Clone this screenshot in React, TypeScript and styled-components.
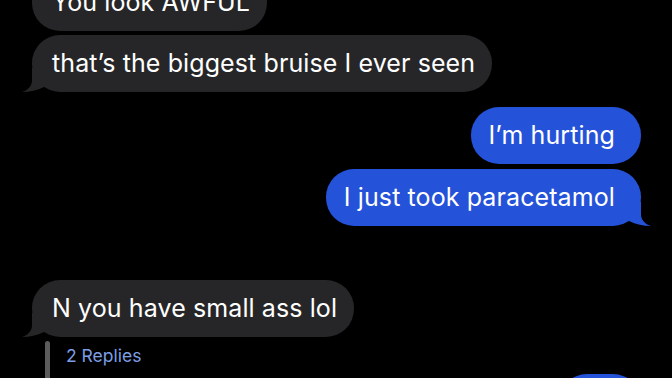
import React from "react";
import styled, { createGlobalStyle } from "styled-components";

type Side = "in" | "out";

interface Message {
  text: string;
  side: Side;
  tail?: boolean;
  gap: number;
}

const messages: Message[] = [
  { text: "You look AWFUL", side: "in", gap: 0 },
  { text: "that’s the biggest bruise I ever seen", side: "in", tail: true, gap: 4 },
  { text: "I’m hurting", side: "out", gap: 15 },
  { text: "I just took paracetamol", side: "out", tail: true, gap: 5 },
  { text: "N you have small ass lol", side: "in", tail: true, gap: 54 },
];

function Tail({ side }: { side: Side }) {
  return (
    <TailSvg side={side} width="22" height="24" viewBox="0 0 22 24">
      <path d="M10 0 L10 12 C10 18 6 22 0 24 C8 24 15 22.5 22 19 L22 0 Z" />
    </TailSvg>
  );
}

function App() {
  return (
    <>
      <GlobalStyle />
      <Screen>
        <Thread>
          {messages.map(message => (
            <Row key={message.text} side={message.side} gap={message.gap}>
              <Bubble side={message.side}>
                {message.text}
                {message.tail && <Tail side={message.side} />}
              </Bubble>
            </Row>
          ))}
          <Replies>
            <ThreadLine />
            <RepliesLink>2 Replies</RepliesLink>
          </Replies>
          {/* next outgoing bubble, its text is below the fold */}
          <Row side="out" gap={4}>
            <Bubble side="out" minWidth={82} />
          </Row>
        </Thread>
      </Screen>
    </>
  );
}

const GlobalStyle = createGlobalStyle`
  html, body {
    margin: 0;
    padding: 0;
    background: #000;
  }
  body {
    font-family: Inter, "Liberation Sans", sans-serif;
  }
`;

const Screen = styled.div`
  width: 672px;
  height: 378px;
  overflow: hidden;
  background: #000;
`;

const Thread = styled.div`
  display: flex;
  flex-direction: column;
  padding: 0 31px 0 32px;
  margin-top: -26px;
`;

const Row = styled.div<{ side: Side; gap: number }>`
  display: flex;
  justify-content: ${p => (p.side === "out" ? "flex-end" : "flex-start")};
  margin-top: ${p => p.gap}px;
`;

const Bubble = styled.div<{ side: Side; minWidth?: number }>`
  position: relative;
  box-sizing: border-box;
  height: 57px;
  min-width: ${p => p.minWidth ?? 0}px;
  display: flex;
  align-items: center;
  padding: ${p => (p.side === "out" ? "0 26px 1px 18px" : "0 17px 1px 20px")};
  border-radius: 28px;
  font-size: 25px;
  letter-spacing: 0.1px;
  color: #fff;
  white-space: nowrap;
  background: ${p => (p.side === "out" ? "#2452d8" : "#262628")};
`;

const TailSvg = styled.svg<{ side: Side }>`
  position: absolute;
  bottom: 0;
  ${p => (p.side === "out" ? "right: -10px; transform: scaleX(-1);" : "left: -10px;")}
  fill: ${p => (p.side === "out" ? "#2452d8" : "#262628")};
`;

const Replies = styled.div`
  display: flex;
  align-items: flex-start;
  gap: 16px;
  height: 29px;
  margin-top: 4px;
  padding-left: 13px;
`;

const ThreadLine = styled.div`
  width: 5px;
  height: 40px;
  border-radius: 3px;
  background: #5c5c5e;
`;

const RepliesLink = styled.div`
  font-size: 17.5px;
  line-height: 20px;
  margin-top: 5px;
  color: #7c9ee4;
`;

export default App;
